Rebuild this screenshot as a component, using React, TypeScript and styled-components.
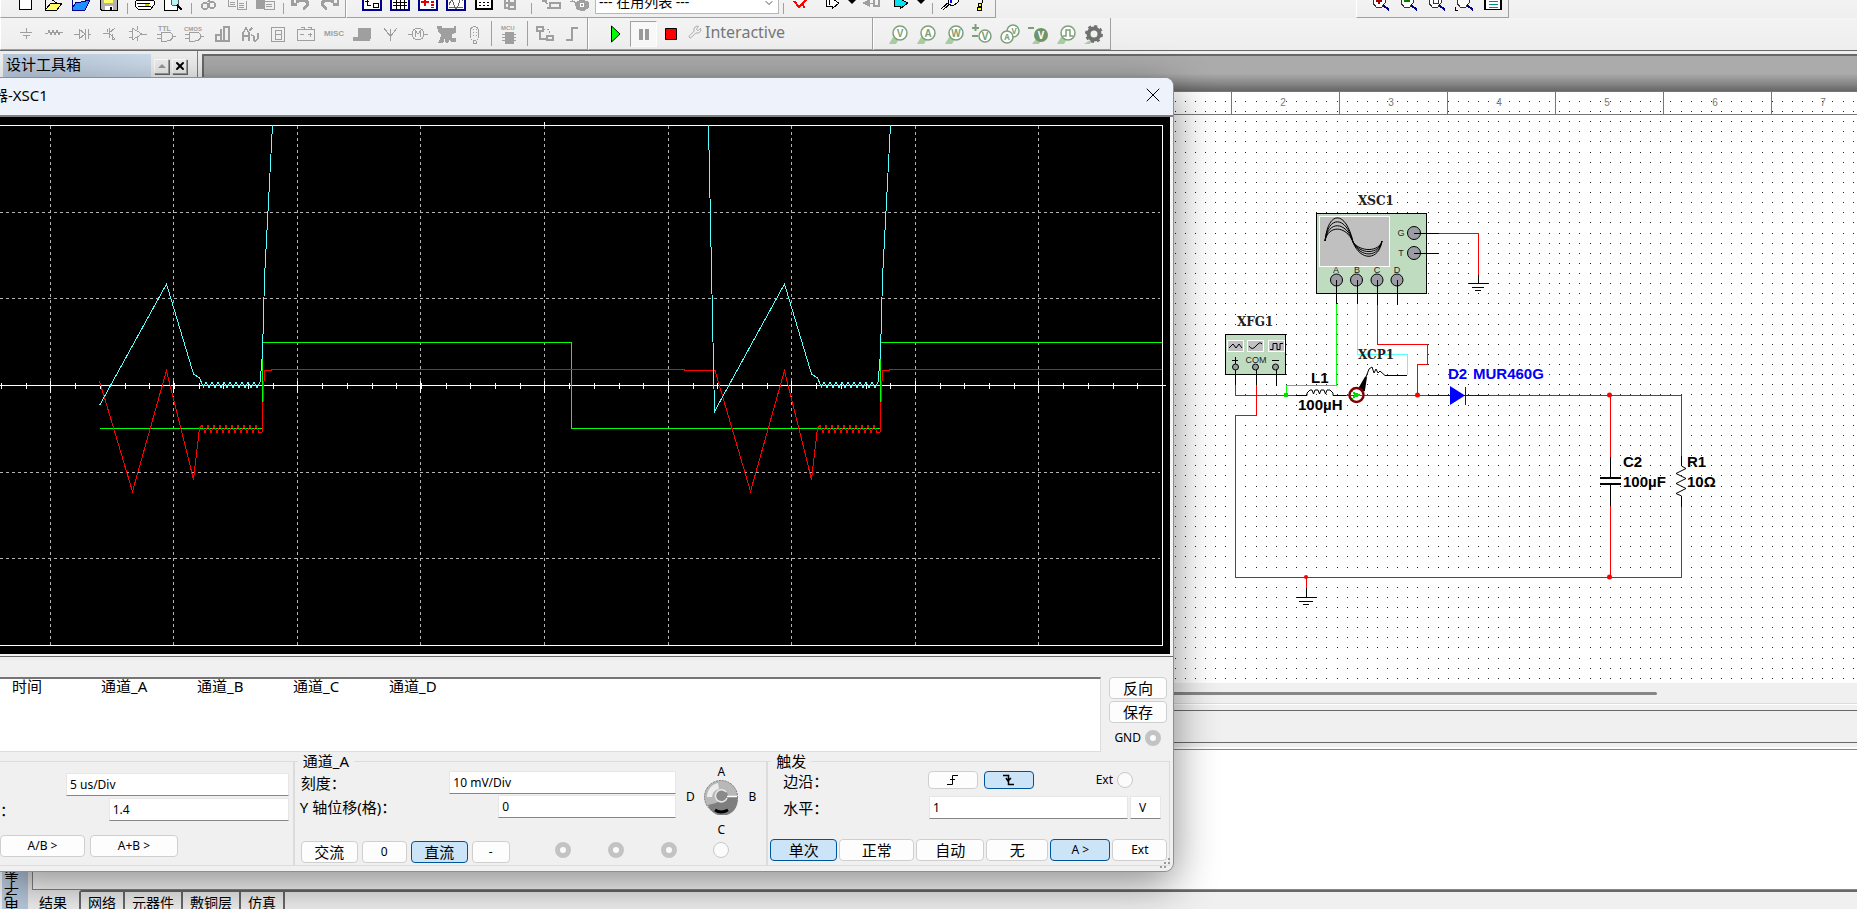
import React from "react";
import styled, { createGlobalStyle, css } from "styled-components";
import { ChevronDown, Wrench, X } from "lucide-react";

const GlobalStyle = createGlobalStyle`
  * { box-sizing: border-box; }
  html, body { margin: 0; padding: 0; height: 100%; overflow: hidden; }
  body {
    background: #f0f0f0;
    color: #000;
    font-family: "Noto Sans", "Noto Sans CJK SC", sans-serif;
    font-size: 15px;
  }
  button, input, select { font-family: inherit; color: inherit; }
  svg { display: block; }
`;

const Desktop = styled.div`
  position: relative;
  display: flex;
  flex-direction: column;
  min-height: 100vh;
  overflow: hidden;
`;

/* ---------- toolbars ---------- */

const ToolRow = styled.div<{ $tall?: boolean }>`
  display: flex;
  height: ${(p) => (p.$tall ? 32 : 18)}px;
  background: linear-gradient(#f3f3f3, #eeeeee);
`;

const ToolGroup = styled.div<{ $pad: number; $end: number }>`
  display: flex;
  align-items: center;
  padding-left: ${(p) => p.$pad}px;
  padding-right: ${(p) => p.$end}px;
  border-right: 1px solid #a0a0a0;
  border-bottom: 1px solid #a0a0a0;
  border-left: 1px solid #fff;
`;

const ToolGap = styled.div<{ $w: number }>`
  flex: 0 1 ${(p) => p.$w}px;
`;

const IconButton = styled.button<{ $w?: number; $pressed?: boolean }>`
  display: flex;
  align-items: center;
  justify-content: center;
  width: ${(p) => p.$w ?? 28}px;
  height: 100%;
  padding: 0;
  border: 0;
  background: none;
  flex: none;
  ${(p) =>
    p.$pressed &&
    css`
      height: 26px;
      background: #f8f8f8;
      border: 1px solid;
      border-color: #a0a0a0 #fff #fff #a0a0a0;
    `}
`;

const TopButton = styled(IconButton)`
  align-items: flex-start;
`;

const Separator = styled.span<{ $w?: number }>`
  flex: none;
  display: flex;
  justify-content: center;
  width: ${(p) => p.$w ?? 8}px;
  height: 100%;
  padding: 3px 0;
  &::before {
    content: "";
    width: 1px;
    background: #a0a0a0;
  }
`;

const ListBox = styled.div`
  position: relative;
  align-self: flex-start;
  display: flex;
  align-items: flex-start;
  width: 184px;
  height: 14px;
  margin: 0 0 0 2px;
  overflow: hidden;
  background: #fff;
  border: 1px solid #b8b8b8;
  border-top: 0;
  svg { margin: -3px 3px 0 0; flex: none; }
`;

const ListSelect = styled.select`
  appearance: none;
  flex: 1;
  height: 20px;
  margin-top: -8px;
  padding: 0 3px;
  border: 0;
  background: transparent;
  font-size: 14px;
  line-height: 20px;
`;

const SimLabel = styled.span`
  display: flex;
  align-items: center;
  gap: 3px;
  padding-left: 3px;
  padding-bottom: 4px;
  color: #777;
  font-size: 16px;
  line-height: 22px;
`;

/* ---------- work area ---------- */

const Main = styled.div`
  display: flex;
  flex: 1;
  border-top: 1px solid #696969;
  min-height: 0;
`;

const Toolbox = styled.aside`
  width: 198px;
  flex: none;
  padding: 3px 10px 0 3px;
  border-right: 1px solid #808080;
`;

const ToolboxTitle = styled.div`
  display: flex;
  align-items: center;
  gap: 3px;
  height: 24px;
  h2 {
    flex: 1;
    margin: 0;
    padding: 0 0 4px 3px;
    background: linear-gradient(90deg, #b7c8dc, #cddcec);
    font-size: 15px;
    font-weight: 400;
    line-height: 20px;
  }
`;

const TinyButton = styled.button`
  display: flex;
  align-items: center;
  justify-content: center;
  width: 15px;
  height: 15px;
  padding: 0;
  background: #f0f0f0;
  border: 1px solid;
  border-color: #fff #a0a0a0 #a0a0a0 #fff;
  box-shadow: 1px 1px #696969;
`;

const Workspace = styled.main`
  flex: 1;
  min-width: 0;
  display: flex;
  flex-direction: column;
  margin: 3px 0 0 4px;
  border-top: 2px solid #696969;
  border-left: 2px solid #696969;
  background: #ababab;
`;

const DocShade = styled.div`
  height: 35px;
  background: linear-gradient(#ababab 50%, #8c8c8c 75%, #666 100%);
`;

const Sheet = styled.div`
  flex: 1;
  min-height: 0;
  overflow: hidden;
  background: #fff;
  border-top: 1px solid #777;
  svg { width: 100%; height: 100%; }
`;

const ScrollTrack = styled.div`
  display: flex;
  align-items: center;
  height: 20px;
  padding-right: 200px;
  background: #f0f0f0;
  &::before {
    content: "";
    flex: 1;
    height: 3px;
    border-radius: 2px;
    background: #868686;
  }
`;

const StatusStrip = styled.div`
  height: 40px;
  padding: 6px 0 0;
  border-top: 1px solid #dcdcdc;
  box-shadow: inset 0 1px #fff;
  border-bottom: 1px solid #696969;
  &::before {
    content: "";
    display: block;
    height: 1px;
    background: #696969;
  }
`;

const Spreadsheet = styled.section`
  display: flex;
  height: 166px;
`;

const SideTitle = styled.div`
  width: 26px;
  margin: 0 4px 0 2px;
  padding-right: 4px;
  background: #b9cade;
  overflow: hidden;
  span {
    writing-mode: vertical-rl;
    transform: rotate(180deg);
    height: 168px;
    line-height: 20px;
    font-size: 15px;
  }
`;

const SheetBody = styled.div`
  flex: 1;
  display: flex;
  flex-direction: column;
  padding-top: 6px;
`;

const ResultArea = styled.div`
  flex: 1;
  background: #fff;
  border: 1px solid #828790;
  border-right: 0;
  box-shadow: 0 -2px #fff;
`;

const TabBar = styled.div`
  display: flex;
  height: 19px;
  overflow: hidden;
`;

const Tab = styled.button<{ $active?: boolean }>`
  flex: none;
  height: 24px;
  padding: 0 ${(p) => (p.$active ? 12 : 7)}px 0 7px;
  border: 0;
  border-right: 2px solid #696969;
  border-top: 2px solid ${(p) => (p.$active ? "transparent" : "#696969")};
  background: #f0f0f0;
  font-size: 14px;
  line-height: 22px;
`;

const TabFill = styled.div`
  flex: 1;
  border-top: 2px solid #696969;
`;

/* ---------- oscilloscope window ---------- */

const ScopeWindow = styled.section`
  position: absolute;
  left: 0;
  top: 77px;
  width: 1174px;
  background: #f0f0f0;
  border: 1px solid #8f8f8f;
  border-left: 0;
  border-radius: 0 9px 9px 0;
  box-shadow: 0 12px 44px rgba(0, 0, 0, 0.46);
  overflow: hidden;
`;

const TitleBar = styled.header`
  display: flex;
  align-items: center;
  justify-content: space-between;
  height: 37px;
  padding: 0 8px 3px 0;
  background: #eef2fa;
  h1 {
    margin: 0 0 0 -7px;
    font-size: 15px;
    font-weight: 400;
    line-height: 20px;
  }
`;

const CloseButton = styled.button`
  display: flex;
  padding: 0;
  border: 0;
  background: none;
`;

const ScopeScreen = styled.div`
  padding-right: 3px;
  border-top: 2px solid #808080;
  border-bottom: 1px solid #696969;
  background: #f4f4f4;
  svg { width: 100%; height: 537px; background: #000; margin-bottom: 2px; }
`;

const ReadoutRow = styled.div`
  display: flex;
  gap: 8px;
  margin-top: 20px;
  padding-right: 6px;
`;

const ReadoutBox = styled.div`
  flex: 1;
  height: 75px;
  background: #fff;
  border-top: 2px solid #757575;
  border-right: 1px solid #ddd;
  border-bottom: 1px solid #ddd;
`;

const ReadoutTable = styled.table`
  border-collapse: collapse;
  margin-left: 12px;
  th {
    width: 96px;
    padding: 0;
    text-align: left;
    font-size: 15px;
    font-weight: 400;
    line-height: 15px;
  }
  th:first-child { width: 89px; }
`;

const SideButtons = styled.div`
  display: flex;
  flex-direction: column;
  gap: 2px;
  width: 58px;
`;

const RadioLabel = styled.label<{ $pad?: boolean }>`
  display: flex;
  align-items: center;
  justify-content: flex-end;
  gap: 4px;
  margin-left: auto;
  padding: ${(p) => (p.$pad ? "4px 6px 0 0" : "0")};
  font-size: 12px;
`;

const RoundRadio = styled.input<{ $off?: boolean }>`
  appearance: none;
  flex: none;
  width: 16px;
  height: 16px;
  margin: 0;
  border-radius: 50%;
  border: ${(p) => (p.$off ? "5px solid #c3c3c3" : "1px solid #c8c8c8")};
  background: #fbfbfb;
`;

const PushButton = styled.button<{ $on?: boolean; $w?: number; $low?: boolean; $latin?: boolean }>`
  display: flex;
  align-items: center;
  justify-content: center;
  width: ${(p) => (p.$w ? `${p.$w}px` : "auto")};
  height: ${(p) => (p.$low ? 18 : 22)}px;
  padding: 0;
  border: 1px solid ${(p) => (p.$on ? "#005499" : "#cfcfcf")};
  border-radius: 4px;
  background: ${(p) => (p.$on ? "#cce4f7" : "#fdfdfd")};
  font-size: ${(p) => (p.$latin ? 12 : 15)}px;
  line-height: 18px;
`;

const Groups = styled.div`
  display: flex;
  padding: 0 3px 5px 0;
`;

const Group = styled.fieldset<{ $w: number; $untitled?: boolean }>`
  display: flex;
  flex-direction: column;
  width: ${(p) => p.$w}px;
  min-width: 0;
  height: ${(p) => (p.$untitled ? 105 : 114)}px;
  margin: ${(p) => (p.$untitled ? 9 : 0)}px 0 0;
  padding: 0;
  border: 1px solid #dcdcdc;
  border-left-width: ${(p) => (p.$untitled ? 0 : 1)}px;
  legend {
    margin-left: 3px;
    padding: 0 5px;
    line-height: 18px;
  }
`;

const Column = styled.div<{ $top: number; $gap: number }>`
  display: flex;
  flex-direction: column;
  gap: ${(p) => p.$gap}px;
  padding-top: ${(p) => p.$top}px;
  flex: 1;
`;

const FieldRow = styled.div<{ $left?: number; $right?: number; $high?: boolean }>`
  display: flex;
  align-items: ${(p) => (p.$high ? "flex-start" : "center")};
  justify-content: space-between;
  height: 23px;
  padding: 0 ${(p) => p.$right ?? 4}px 0 ${(p) => p.$left ?? 0}px;
`;

const FieldLabel = styled.label`
  white-space: nowrap;
  line-height: 20px;
`;

const FieldInput = styled.input<{ $w: number }>`
  width: ${(p) => p.$w}px;
  height: 23px;
  padding: 0 3px;
  border: 1px solid #e6e6e6;
  border-bottom-color: #868686;
  background: #fff;
  font-size: 12px;
`;

const UnitSelect = styled.select`
  appearance: none;
  width: 31px;
  height: 23px;
  padding: 0 8px;
  border: 1px solid #e6e6e6;
  border-bottom-color: #868686;
  background: #fff;
  font-size: 12px;
`;

const ButtonRow = styled.div<{ $gap: number; $left: number; $bottom: number }>`
  display: flex;
  align-items: center;
  gap: ${(p) => p.$gap}px;
  margin-top: auto;
  padding: 0 0 ${(p) => p.$bottom}px ${(p) => p.$left}px;
`;

const RadioSet = styled.div`
  display: flex;
  gap: 37px;
  margin-left: 41px;
  padding-bottom: 4px;
`;

const Inline = styled.div<{ $gap: number }>`
  display: flex;
  gap: ${(p) => p.$gap}px;
`;

const Split = styled.div`
  display: flex;
  flex: 1;
  height: 94px;
`;

const KnobPad = styled.div`
  display: grid;
  grid-template-columns: 16px 36px 16px;
  grid-template-rows: 12px 38px 20px 24px;
  grid-template-areas: ". a ." "d k b" ". c ." ". r .";
  column-gap: 5px;
  align-items: center;
  justify-items: center;
  align-content: start;
  width: 84px;
  margin-top: -4px;
  font-size: 12px;
  line-height: 12px;
`;

const Cell = styled.div<{ $area: string }>`
  grid-area: ${(p) => p.$area};
  align-self: ${(p) => (p.$area === "c" || p.$area === "r" ? "end" : "center")};
`;

const Grip = styled.div`
  position: absolute;
  right: 2px;
  bottom: 2px;
`;

/* ---------- toolbar drawings ---------- */

const G = "#9f9f9f";

const Ico = ({ children, w = 20, h = 20 }: { children: React.ReactNode; w?: number; h?: number }) => (
  <svg width={w} height={h} viewBox={`0 0 ${w} ${h}`} fill="none" stroke={G} shapeRendering="crispEdges">
    {children}
  </svg>
);

const fileIcons: [string, React.ReactNode][] = [
  ["新建", <path d="M4.500 0V9.500H16.500V0" fill="#fff" stroke="#000" strokeWidth="1.500" />],
  ["打开", <><path d="M2 0V10H14L19 3H8L3 9" fill="#ffff66" stroke="#000" /><path d="M9 0l5 3" stroke="#000" /></>],
  ["打开示例", <path d="M1 0V10H14L19 0L10 2H5L1 9" fill="#1e90ff" stroke="#00008b" />],
  ["保存", <><path d="M1 0V9L3 10.500H18V0" fill="#b0b0b0" stroke="#000" /><path d="M5 0h9v3H5z" fill="#ffff66" stroke="none" /><path d="M6 6h8v4H6z" fill="#fff" stroke="none" /><path d="M12 7v3" stroke="#000" strokeWidth="2" /></>],
];
const printIcons: [string, React.ReactNode][] = [
  ["打印", <><path d="M2 0H16L19 1V5L16 9H3L0 6V2Z" fill="#fff" stroke="#000" /><path d="M2 3.500H15M3 6.500h13" stroke="#000" /><path d="M10 5h4" stroke="#cccc00" strokeWidth="2" /></>],
  ["打印预览", <><path d="M1 0V10H14V0" fill="#fff" stroke="#000" /><circle cx="12" cy="2" r="4" fill="#b8f4f4" stroke="#555" /><path d="M14 5L19 10" stroke="#000" strokeWidth="2" /></>],
];
const editIcons: [string, React.ReactNode][] = [
  ["剪切", <><circle cx="6" cy="6" r="3" strokeWidth="1.500" /><circle cx="13" cy="5" r="3" strokeWidth="1.500" /><path d="M7 3L11 0M12 2L9 0" /></>],
  ["复制", <><path d="M1 0V6H9M3 2h5M3 4h5" /><path d="M10 0V9H19V1M12 3h5M12 5h5M12 7h5" /></>],
  ["粘贴", <><path d="M1 0h8v8H1z" fill={G} /><path d="M9 1V9H19V1zM11 4h6M11 6h6" fill="#f0f0f0" /></>],
];

const boxIcons: [string, React.ReactNode][] = [
  ["设计工具箱", <><path d="M1 0V10H19V0" fill="#fff" stroke="#00008b" strokeWidth="2" /><path d="M5 0v5h4M3 1h4M11 3h5v4h-5z" stroke="#000" /></>],
  ["电子表格视图", <><path d="M1 0V10H19V0" fill="#fff" stroke="#00008b" strokeWidth="2" /><path d="M3 2.500H17M3 5.500H17M6.500 0V9M10.500 0V9M14.500 0V9" stroke="#000" /></>],
  ["网表查看器", <><path d="M1 0V10H19V0" fill="#fff" stroke="#00008b" strokeWidth="2" /><path d="M3 2H11M7 0V6" stroke="#e00000" strokeWidth="2" /><path d="M14 1v7" stroke="#e00000" strokeWidth="3" strokeDasharray="2 1" /></>],
  ["图示仪", <><path d="M1 0V10H19V0" fill="#fff" stroke="#00008b" strokeWidth="2" /><path d="M3 5Q6-4 8 5T13 3T17 1M3 7H17" stroke="#666" /></>],
  ["后处理器", <><path d="M2 0V9H18V0" fill="#fff" stroke="#000" strokeWidth="1.500" /><path d="M5 2.500H16M5 5.500H16" stroke="#000" strokeDasharray="2 2" /></>],
  ["母电路图", <path d="M7 0v3h6V0M3 0v8h4M7 5h6v4H7zM3 3h4" strokeWidth="1.500" />],
];

const TopIcons = ({ items }: { items: [string, React.ReactNode][] }) => (
  <>
    {items.map(([name, art]) => (
      <TopButton key={name} aria-label={name}>
        <Ico h={12}>{art}</Ico>
      </TopButton>
    ))}
  </>
);

const svgText = (t: string, x: number, y: number, size = 7) => (
  <text x={x} y={y} fontSize={size} fontWeight="700" fill={G} stroke="none" fontFamily="Liberation Sans, sans-serif">{t}</text>
);

const partIcons: [string, React.ReactNode][] = [
  ["电源", <path d="M4 8.500H16M10.500 4V8M7 11.500H14M10.500 12V15" />],
  ["基本", <path d="M1 9H4L5 6L7 11L9 6L11 11L13 6L15 11L16 8H19" />],
  ["二极管", <path d="M2 10.500H7M7 5V15L13 10ZM13.500 5V16M16 10.500h3M16.500 5v10" />],
  ["晶体管", <path d="M3 9.500H9M9.500 4V14M9 9L15 4M9 9L15 15M12 10v5h3M7 5v3" />],
  ["模拟", <path d="M4 4V16L14 10ZM1 7h3M1 13h3M14 10.500h5M9 2v4M9 13v4" />],
  ["TTL", <>{svgText("TTL", 2, 7)}<path d="M5 8V17H11Q16 17 17 12Q16 8 11 8ZM1 10.500h4M1 14.500h4M17 12.500h3" /></>],
  ["CMOS", <>{svgText("CMOS", 0, 7, 6)}<path d="M5 8V17H11Q16 17 17 12Q16 8 11 8ZM1 10.500h4M1 14.500h4M17 12.500h3" /></>],
  ["其他数字", <path d="M4 17V11H9V17ZM9 5V17M12 3H17V17H12ZM6 17h11" strokeWidth="1.500" />],
  ["混合", <path d="M3 17V9l3-5l3 5v8M3 12h6M11 11q4 0 3 6M18 9v5l-3 4M9 7l3-3" strokeWidth="1.500" />],
  ["指示器", <path d="M3.500 3.500H16.500V17.500H3.500ZM7 6h6v9H7zM7 10.500h6" />],
  ["功率", <path d="M1.500 5.500H18.500V16.500H1.500ZM5 3h3v2M12 3h3v2M4 10.500h4M12 10.500h4M14 8.500v4" />],
  ["其他", svgText("MISC", 0, 12, 8)],
  ["高级外设", <><path d="M6 4H18V14H6Z" fill={G} /><path d="M1 16H18M1 14h5" strokeWidth="2" /></>],
  ["射频", <path d="M10.500 5V17M10 12L4 4M11 12L17 4" />],
  ["机电", <><circle cx="10" cy="10" r="6" /><path d="M0 10.500h4M16 10.500h4M7.500 13V7L10 10L12.500 7V13" /></>],
  ["NI", <path d="M1 2H5V4H18V2H20V8L15 10V14H19V17H15L14 13L12 18H10L9 12L7 18H3L6 11L3 8Z" fill={G} />],
  ["连接器", <><rect x="6.500" y="2.500" width="8" height="14" rx="4" /><path d="M9.500 5v9M12.500 5v9" strokeDasharray="1 2" /><path d="M9 17v2h3v-2" /></>],
];

const chip = (
  <>
    {svgText("MCU", 2, 6, 6)}
    <path d="M6 8h8v11H6z" fill={G} />
    <path d="M3 10.500h14M3 13.500h14M3 16.500h14" />
  </>
);

const PG = "#7d9f78";
const probeLetters: React.ReactNode[] = ["V", "A", "W"].map((l) => (
  <g key={l}>
    <path d="M1 20H8L11 15L5 13Z" fill="#a9cda3" />
    <circle cx="12" cy="9" r="7" fill="#fff" stroke={PG} strokeWidth="1.500" />
    <text x="12" y="13" fontSize="10" fontWeight="700" textAnchor="middle" fill={PG} fontFamily="Liberation Sans, sans-serif">{l}</text>
  </g>
));
const probes: [string, React.ReactNode][] = [
  ["电压探针", probeLetters[0]],
  ["电流探针", probeLetters[1]],
  ["功率探针", probeLetters[2]],
  ["差分电压探针", <><path d="M0 4h7M3.500 0v7M0 12h6" stroke={PG} strokeWidth="2" /><circle cx="13" cy="12" r="6" fill="#fff" stroke={PG} strokeWidth="1.500" /><text x="13" y="16" fontSize="10" fontWeight="700" textAnchor="middle" fill={PG}>V</text></>],
  ["电压电流探针", <><circle cx="13" cy="7" r="6" fill="#fff" stroke={PG} strokeWidth="1.500" /><text x="14" y="10" fontSize="8" fontWeight="700" textAnchor="middle" fill={PG}>V</text><circle cx="7" cy="13" r="6" fill="#fff" stroke={PG} strokeWidth="1.500" /><text x="7" y="16" fontSize="8" fontWeight="700" textAnchor="middle" fill={PG}>A</text></>],
  ["参考电压探针", <><path d="M0 4h6" stroke={PG} strokeWidth="2" /><path d="M4 20H11L13 16L8 15Z" fill="#a9cda3" /><circle cx="13" cy="11" r="7" fill="#6f9469" /><text x="13" y="15" fontSize="10" fontWeight="700" textAnchor="middle" fill="#fff">V</text></>],
  ["数字探针", <><path d="M1 20H8L11 15L5 13Z" fill="#a9cda3" /><circle cx="12" cy="9" r="7" fill="#fff" stroke={PG} strokeWidth="1.500" /><path d="M7 12h3V6h4v6h3" fill="none" stroke={PG} strokeWidth="1.500" /></>],
  ["设置", <><path d="M0 20H6L8 15Z" fill="#a9cda3" /><circle cx="10" cy="10" r="5.500" fill="none" stroke="#707070" strokeWidth="4" /><circle cx="10" cy="10" r="8" fill="none" stroke="#707070" strokeWidth="2" strokeDasharray="3.140 3.140" /></>],
];

const magnifiers = ["放大", "缩小", "缩放区域", "缩放页面"];

/* ---------- oscilloscope traces ---------- */

const ripple = (x0: number, x1: number, hi: number, lo: number) => {
  let d = "";
  let up = true;
  for (let x = x0; x < x1; x += 3) {
    d += `L${x} ${up ? hi : lo}`;
    up = !up;
  }
  return d;
};

const P = 618;
const cyanBurst = (o: number) =>
  `L${o + 166.5} 284L${o + 193.5} 374L${o + 199.5} 378L${o + 203.5} 387` +
  ripple(o + 206, o + 262, 382.5, 388) +
  `L${o + 262.5} 353L${o + 264.5} 278L${o + 272.5} 125`;
const redBurst = (o: number) =>
  `L${o + 132.5} 491.500L${o + 166.5} 370.500L${o + 193.5} 479.500L${o + 199.5} 428` +
  ripple(o + 202, o + 262, 425.5, 432.5) +
  `L${o + 262.5} 432L${o + 262.5} 413L${o + 264.5} 370.500H${o + 271}V369.500`;

const gridX = [50.5, 173.5, 297.5, 420.5, 544.5, 668.5, 791.5, 915.5, 1038.5];
const gridY = [212.5, 298.5, 472.5, 558.5];
const ticks = Array.from({ length: 47 }, (_, i) => Math.round(1 + i * 24.7) + 0.5);

const Traces = () => (
  <svg role="img" aria-label="示波器波形" fill="none" shapeRendering="crispEdges">
    <g transform="translate(0,-117)">
      <g stroke="#b4b4b4" strokeDasharray="3 3">
        {gridX.map((x) => <path key={x} d={`M${x} 126V645`} />)}
        {gridY.map((y) => <path key={y} d={`M0 ${y}H1160`} />)}
      </g>
      <g stroke="#fff">
        <path d="M0 125.500H1162.500V645.500H0M0 385.500H1166M544.500 122V125" />
        {ticks.map((x) => <path key={x} d={`M${x} 383V389`} />)}
        {gridX.map((x) => <path key={x} d={`M${x} 381V393`} />)}
      </g>
      <path stroke="#00ff00" d="M99.500 428.500H262.500V342.500H571.500V428.500H880.500V342.500H1162" />
      <path stroke="#ff0000" d={`M99.500 381${redBurst(0)}H684V370.500H715${redBurst(P)}H1162`} />
      <path stroke="#54ffff" d={`M99.500 405.500${cyanBurst(0)}M708.500 125L713 342L714.500 411.500${cyanBurst(P)}`} />
    </g>
  </svg>
);

/* ---------- schematic ---------- */

const dotsX = Array.from({ length: 140 }, (_, i) => Math.round(1174.6 + i * 10.12));
const dotsY = Array.from({ length: 58 }, (_, i) => Math.round(101 + i * 10.12));
const dotPath = dotsY.map((y) => dotsX.map((x) => `M${x} ${y}h1v1h-1z`).join("")).join("");

const waves = [28, 34, 41, 48];
const sine = (a: number) =>
  `M1325 241C1328 ${237 - a * 0.75} 1346 ${237 - a * 0.75} 1353 242C1360 ${245 + a * 0.45} 1379 ${245 + a * 0.45} 1382 241`;

const Schematic = () => (
  <svg role="img" aria-label="电路原理图" fill="none" shapeRendering="crispEdges">
    <g transform="translate(-204,-92)">
      <path d={dotPath} fill="#222" />
      <path d="M204 114.500H2600" stroke="#777" />
      {[2, 3, 4, 5, 6, 7, 8, 9].map((n) => (
        <g key={n}>
          <path d={`M${1231.5 + (n - 2) * 108} 92V114`} stroke="#777" />
          <text x={1283 + (n - 2) * 108} y="106" fontSize="10" textAnchor="middle" fill="#777" fontFamily="Liberation Sans, sans-serif">{n}</text>
        </g>
      ))}

      <g stroke="#ff0000">
        <path d="M1439 233.500H1478.500V275M1377.500 305V344.500H1427.500V364.500H1417.500V395.500" />
        <path d="M1235.500 385V395.500H1296M1346 395.500H1428M1488 395.500H1681.500V456M1681.500 507V577.500H1235.500V415.500H1256.500V385M1610.500 395V457M1610.500 506V577M1306.500 577V588" />
      </g>
      <path d="M1336.500 304V385.500H1286.500V395" stroke="#00ff00" />
      <path d="M1357.500 304V354.500H1407.500V375" stroke="#54ffff" />
      <g fill="#ff0000" shapeRendering="auto">
        <circle cx="1417.500" cy="395" r="2.500" />
        <circle cx="1609.500" cy="395" r="2.500" />
        <circle cx="1609.500" cy="577" r="2.500" />
        <circle cx="1306" cy="577" r="2" />
      </g>
      <circle cx="1286" cy="395" r="2.500" fill="#00e000" />

      <rect x="1316.500" y="213.500" width="110" height="80" fill="#c0dcc0" stroke="#000" />
      <rect x="1319.500" y="216.500" width="70" height="50" fill="#c0c0c0" stroke="#fff" />
      <g stroke="#000" shapeRendering="auto">
        {waves.map((a) => <path key={a} d={sine(a - 12)} />)}
      </g>
      <g fill="#9c9ca4" stroke="#000" shapeRendering="auto">
        {[1336.5, 1356.5, 1377, 1397].map((x) => <circle key={x} cx={x} cy="280" r="6" />)}
        <circle cx="1414" cy="233" r="6.500" />
        <circle cx="1414" cy="253" r="6.500" />
      </g>
      <path stroke="#000" d="M1336.500 280V304M1357.500 280V304M1377.500 280V305M1397.500 280V305M1414 233.500H1439M1414 253.500H1439M1478.500 275V283M1468 283.500H1489M1472 287.500H1484M1475 290.500H1481" />
      <g fontFamily="Liberation Sans, sans-serif" fontSize="9" fill="#222" textAnchor="middle">
        <text x="1336" y="273">A</text>
        <text x="1357" y="273">B</text>
        <text x="1377" y="273">C</text>
        <text x="1397" y="273">D</text>
        <text x="1401" y="236">G</text>
        <text x="1401" y="256">T</text>
      </g>

      <rect x="1225.500" y="334.500" width="60" height="40" fill="#c0dcc0" stroke="#000" />
      <g fill="#c0c0c0" stroke="#fff">
        <rect x="1227.500" y="340.500" width="16" height="11" />
        <rect x="1247.500" y="340.500" width="16" height="11" />
        <rect x="1268.500" y="340.500" width="16" height="11" />
      </g>
      <path stroke="#000" shapeRendering="auto" d="M1229 348L1233 344L1236 348L1239 344L1242 348M1249 346Q1252 351 1256 346T1262 344M1270 349.500H1273V343.500H1277V349.500H1280V343.500H1283" />
      <path stroke="#000" d="M1232 360.500H1238M1235.500 357V364M1272 360.500H1279M1235.500 367V385M1256.500 367V385M1276.500 367V386" />
      <text x="1256" y="363" fontSize="9" textAnchor="middle" fill="#222" fontFamily="Liberation Sans, sans-serif">COM</text>
      <g fill="#9c9ca4" stroke="#000" shapeRendering="auto">
        {[1235.5, 1255.5, 1275.5].map((x) => <circle key={x} cx={x} cy="367" r="3" />)}
      </g>

      <g stroke="#000" shapeRendering="auto">
        <path d="M1296 395.500H1307V393L1310 390L1312 390L1313.500 394L1315 390H1318L1319.500 394L1321 390H1324L1325.500 394L1327 390H1330L1333 393V395.500H1346" />
        <path d="M1407 375.500H1385L1380 371L1378 373L1376 369L1374 373L1372 367L1369 369L1366 377" />
        <path d="M1366 377L1359 389L1364 390Z" fill="#000" strokeWidth="2" />
      </g>
      <circle cx="1356.500" cy="395" r="7" fill="#fff" stroke="#800000" strokeWidth="2.500" shapeRendering="auto" />
      <path d="M1350 395.500H1363" stroke="#ff0000" />
      <path d="M1352 391L1361 395L1352 399L1354 395Z" fill="#00e000" />

      <path d="M1450 386V405L1465 395.500Z" fill="#0000ff" shapeRendering="auto" />
      <path d="M1428 395.500H1488M1465.500 387V405" stroke="#0000ff" />
      <path stroke="#000" d="M1610.500 457V478M1610.500 484V506M1681.500 456V466M1681.500 496V507M1306.500 588V597M1296 597.500H1317M1299 601.500H1313M1303 604.500H1309" />
      <path stroke="#000" strokeWidth="2" d="M1600 478H1621M1600 484H1621" />
      <path stroke="#000" shapeRendering="auto" d="M1681.500 466L1686 468.500L1676 473.500L1686 478.500L1676 483.500L1686 488.500L1676 493.500L1681.500 496" />

      <g fontFamily="DejaVu Serif, serif" fontSize="12" fontWeight="700" fill="#222">
        <text x="1358" y="205">XSC1</text>
        <text x="1237" y="326">XFG1</text>
        <text x="1358" y="359">XCP1</text>
      </g>
      <g fontFamily="Liberation Sans, sans-serif" fontSize="15" fontWeight="700" fill="#000">
        <text x="1311" y="383">L1</text>
        <text x="1298" y="410">100µH</text>
        <text x="1448" y="379" fill="#0000ff">D2</text>
        <text x="1473" y="379" fill="#0000ff">MUR460G</text>
        <text x="1623" y="467">C2</text>
        <text x="1623" y="487">100µF</text>
        <text x="1687" y="467">R1</text>
        <text x="1687" y="487">10Ω</text>
      </g>
    </g>
  </svg>
);

const Knob = () => (
  <svg width="36" height="36" viewBox="0 0 36 36">
    <circle cx="18" cy="18" r="16.500" fill="#b8b8b8" stroke="#777" strokeDasharray="2 1" />
    <path d="M5 26A15 15 0 0 0 34 17L22 18L13 24Z" fill="#7e7e7e" />
    <path d="M4 18A14 14 0 0 1 15 4L16 10A8 8 0 0 0 9 18Z" fill="#ececec" />
    <circle cx="19" cy="17" r="6" fill="#8a8a8a" />
    <path d="M24 19A6 6 0 1 1 23 13" fill="none" stroke="#e6e6e6" strokeWidth="1.500" />
    <path d="M24 17.500H34" stroke="#fff" strokeWidth="1.500" />
    <path d="M12 31Q18 35 25 31" fill="none" stroke="#000" strokeWidth="3" />
  </svg>
);

const Caret = () => <svg width="8" height="4"><path d="M0 0H8L4 4Z" fill="#000" /></svg>;

export default function App() {
  return (
    <>
      <GlobalStyle />
      <Desktop>
        <ToolRow>
          <ToolGroup $pad={10} $end={2}>
            <TopIcons items={fileIcons} />
            <Separator />
            <TopIcons items={printIcons} />
            <Separator />
            <TopIcons items={editIcons} />
            <Separator />
            <TopButton aria-label="撤销"><Ico h={12}><path d="M1 0V4H6M5 2Q14-2 17 3Q17 6 12 9" strokeWidth="3" /></Ico></TopButton>
            <TopButton aria-label="重做"><Ico h={12}><path d="M19 0V4H14M15 2Q6-2 3 3Q3 6 8 9" strokeWidth="3" /></Ico></TopButton>
          </ToolGroup>
          <ToolGroup $pad={11} $end={1}>
            <TopIcons items={boxIcons} />
            <Separator $w={11} />
            <TopButton aria-label="元器件向导"><Ico h={12}><path d="M1 1h5M3 0l3 4M9 3h10v5H9zM6 8h3" strokeWidth="1.500" /></Ico></TopButton>
            <TopButton aria-label="数据库管理器"><Ico h={12}><path d="M1 1h5M3 0l3 3" /><path d="M6 3L12 0L19 2V8L14 11L8 9Z" fill={G} /><circle cx="13" cy="5" r="2" stroke="#fff" /></Ico></TopButton>
            <ListBox>
              <ListSelect aria-label="在用列表"><option>--- 在用列表 ---</option></ListSelect>
              <ChevronDown size={12} color="#555" />
            </ListBox>
            <Separator />
            <TopButton $w={31} aria-label="电气规则检查"><Ico h={12}><path d="M1 1L6 7L13 0M6 7L10 4L11 8" stroke="#ff0000" strokeWidth="2" /></Ico></TopButton>
            <TopButton aria-label="转移到 PCB"><Ico h={12}><path d="M4 0V6H10V9L17 3L12 0M7 0v5" fill="#fff" stroke="#000" /></Ico></TopButton>
            <TopButton $w={12} aria-label="更多"><Caret /></TopButton>
            <TopButton aria-label="反向注解"><Ico h={12}><path d="M1 3L7 0V6ZM7 3h4" fill={G} /><path d="M12 0v6h5V0" strokeWidth="2" /></Ico></TopButton>
            <TopButton aria-label="正向注解"><Ico h={12}><path d="M4 0V6H10V9L18 3L12 0" fill="#00e5ee" stroke="#000" /></Ico></TopButton>
            <TopButton $w={14} aria-label="更多注解"><Caret /></TopButton>
            <Separator />
            <TopButton aria-label="查找范例"><Ico h={12}><path d="M1 9L9 2M3 10L10 4" stroke="#000" /><path d="M8 0V4L13 6L18 2V0" fill="#fff" stroke="#000" /><path d="M11 0v3" stroke="#0000ff" strokeWidth="2" /></Ico></TopButton>
            <TopButton $w={30} aria-label="帮助"><Ico h={12}><path d="M14 0L13 3L9 4V6H12V3M8 7h4v3H8z" fill="#ffff00" stroke="#000" /></Ico></TopButton>
          </ToolGroup>
          <ToolGap $w={360} />
          <ToolGroup $pad={10} $end={1}>
            {magnifiers.map((m, i) => (
              <TopButton key={m} aria-label={m}>
                <Ico h={12}>
                  <path d="M2 0V3L5 7H11L14 3V0" fill="#fff" stroke="#333" />
                  <path d="M12 5L18 10" stroke="#00008b" strokeWidth="2" />
                  {i === 0 && <path d="M8 0v4M5 1h6" stroke="#a00000" strokeWidth="2" />}
                  {i === 1 && <path d="M5 1h6" stroke="#008000" strokeWidth="2" />}
                  {i === 2 && <path d="M6 0v3h5V0" stroke="#333" />}
                  {i === 3 && <path d="M0 7v3h3" stroke="#000" />}
                </Ico>
              </TopButton>
            ))}
            <TopButton aria-label="全屏"><Ico h={12}><path d="M2 0V9.500H18V0" fill="#fff" stroke="#000" strokeWidth="1.500" /><path d="M6 1.500h9M6 4.500h9M6 7.500h9" stroke="#008b8b" /></Ico></TopButton>
          </ToolGroup>
        </ToolRow>

        <ToolRow $tall>
          <ToolGroup $pad={11} $end={0}>
            {partIcons.map(([name, art]) => (
              <IconButton key={name} aria-label={name}><Ico>{art}</Ico></IconButton>
            ))}
            <Separator $w={7} />
            <IconButton aria-label="MCU"><Ico>{chip}</Ico></IconButton>
            <Separator />
            <IconButton aria-label="层次块"><Ico><path d="M2 3h6v4H2zM5 7v8h6M12 12h6v4h-6z" strokeWidth="1.500" /><path d="M8 5h6v6" strokeDasharray="2 2" /></Ico></IconButton>
            <IconButton aria-label="总线"><Ico><path d="M3 16H9V4H15" strokeWidth="2" /></Ico></IconButton>
          </ToolGroup>
          <ToolGroup $pad={13} $end={87}>
            <IconButton aria-label="运行"><svg width="10" height="18"><path d="M.5 1V17L9 9Z" fill="#00ff00" stroke="#000" /></svg></IconButton>
            <IconButton $w={27} $pressed aria-label="暂停"><svg width="12" height="12"><path d="M1 1h4v11H1zM7 1h4v11H7z" fill="#999" /></svg></IconButton>
            <IconButton aria-label="停止"><svg width="12" height="12"><path d="M.5.5h11v11H.5z" fill="#ff0000" stroke="#000" /></svg></IconButton>
            <SimLabel><Wrench size={14} strokeWidth={1} />Interactive</SimLabel>
          </ToolGroup>
          <ToolGroup $pad={10} $end={2}>
            {probes.map(([name, art]) => (
              <IconButton key={name} aria-label={name}><svg width="20" height="20">{art}</svg></IconButton>
            ))}
          </ToolGroup>
        </ToolRow>

        <Main>
          <Toolbox>
            <ToolboxTitle>
              <h2>设计工具箱</h2>
              <TinyButton aria-label="折叠"><svg width="8" height="4"><path d="M4 0L8 4H0Z" fill="#999" /></svg></TinyButton>
              <TinyButton aria-label="关闭工具箱"><X size={12} strokeWidth={4} /></TinyButton>
            </ToolboxTitle>
          </Toolbox>
          <Workspace>
            <DocShade />
            <Sheet><Schematic /></Sheet>
            <ScrollTrack />
          </Workspace>
        </Main>
        <StatusStrip />
        <Spreadsheet>
          <SideTitle><span>电子表格视图</span></SideTitle>
          <SheetBody>
            <ResultArea />
            <TabBar>
              <Tab $active>结果</Tab>
              <Tab>网络</Tab>
              <Tab>元器件</Tab>
              <Tab>敷铜层</Tab>
              <Tab>仿真</Tab>
              <TabFill />
            </TabBar>
          </SheetBody>
        </Spreadsheet>

        <ScopeWindow>
          <TitleBar>
            <h1>器-XSC1</h1>
            <CloseButton aria-label="关闭"><X size={24} strokeWidth={1} /></CloseButton>
          </TitleBar>
          <ScopeScreen><Traces /></ScopeScreen>
          <ReadoutRow>
            <ReadoutBox>
              <ReadoutTable>
                <thead>
                  <tr><th>时间</th><th>通道_A</th><th>通道_B</th><th>通道_C</th><th>通道_D</th></tr>
                </thead>
              </ReadoutTable>
            </ReadoutBox>
            <SideButtons>
              <PushButton>反向</PushButton>
              <PushButton>保存</PushButton>
              <RadioLabel $pad>GND<RoundRadio type="radio" name="gnd" $off /></RadioLabel>
            </SideButtons>
          </ReadoutRow>
          <Groups>
            <Group $w={294} $untitled aria-label="时基">
              <Column $top={11} $gap={2}>
                <FieldRow $left={66}>
                  <FieldInput $w={224} aria-label="标度" defaultValue="5 us/Div" />
                </FieldRow>
                <FieldRow>
                  <FieldLabel htmlFor="xpos">：</FieldLabel>
                  <FieldInput $w={180} id="xpos" defaultValue="1.4" />
                </FieldRow>
                <ButtonRow $gap={5} $left={0} $bottom={8}>
                  <PushButton $w={85} $latin>A/B &gt;</PushButton>
                  <PushButton $w={88} $latin>A+B &gt;</PushButton>
                </ButtonRow>
              </Column>
            </Group>
            <Group $w={474}>
              <legend>通道_A</legend>
              <Split>
                <Column $top={1} $gap={1}>
                  <FieldRow $left={6} $right={6}>
                    <FieldLabel htmlFor="scale">刻度：</FieldLabel>
                    <FieldInput $w={227} id="scale" defaultValue="10 mV/Div" />
                  </FieldRow>
                  <FieldRow $left={5} $right={6}>
                    <FieldLabel htmlFor="ypos">Y 轴位移(格)：</FieldLabel>
                    <FieldInput $w={178} id="ypos" defaultValue="0" />
                  </FieldRow>
                  <ButtonRow $gap={4} $left={6} $bottom={2}>
                    <PushButton $w={57}>交流</PushButton>
                    <PushButton $w={45} $latin>0</PushButton>
                    <PushButton $w={57} $on>直流</PushButton>
                    <PushButton $w={38} $latin>-</PushButton>
                    <RadioSet>
                      <RoundRadio type="radio" name="ch" aria-label="通道 1" $off />
                      <RoundRadio type="radio" name="ch" aria-label="通道 2" $off />
                      <RoundRadio type="radio" name="ch" aria-label="通道 3" $off />
                    </RadioSet>
                  </ButtonRow>
                </Column>
                <KnobPad>
                  <Cell $area="a">A</Cell>
                  <Cell $area="d">D</Cell>
                  <Cell $area="k"><Knob /></Cell>
                  <Cell $area="b">B</Cell>
                  <Cell $area="c">C</Cell>
                  <Cell $area="r"><RoundRadio type="radio" name="ch" aria-label="通道 4" /></Cell>
                </KnobPad>
              </Split>
            </Group>
            <Group $w={403}>
              <legend>触发</legend>
              <Split>
                <Column $top={1} $gap={2}>
                  <FieldRow $left={15} $right={36} $high>
                    <FieldLabel as="span">边沿：</FieldLabel>
                    <ToolGap $w={100} />
                    <Inline $gap={6}>
                      <PushButton $w={50} $low aria-label="上升沿"><svg width="14" height="12"><path d="M1 10.500H6.500V1.500H12M4 5.500H9" fill="none" stroke="#000" /></svg></PushButton>
                      <PushButton $w={50} $low $on aria-label="下降沿"><svg width="14" height="12"><path d="M1 1.500H6.500V10.500H12M4 4L6 7L9 4" fill="none" stroke="#000" strokeWidth="1.500" /></svg></PushButton>
                    </Inline>
                    <RadioLabel>Ext<RoundRadio type="radio" name="ext" /></RadioLabel>
                  </FieldRow>
                  <FieldRow $left={15} $right={8}>
                    <FieldLabel htmlFor="level">水平：</FieldLabel>
                    <Inline $gap={2}>
                      <FieldInput $w={199} id="level" defaultValue="1" />
                      <UnitSelect aria-label="单位"><option>V</option></UnitSelect>
                    </Inline>
                  </FieldRow>
                  <ButtonRow $gap={2} $left={2} $bottom={4}>
                    <PushButton $w={67} $on>单次</PushButton>
                    <PushButton $w={75}>正常</PushButton>
                    <PushButton $w={68}>自动</PushButton>
                    <PushButton $w={62}>无</PushButton>
                    <PushButton $w={60} $on $latin>A &gt;</PushButton>
                    <PushButton $w={55} $latin>Ext</PushButton>
                  </ButtonRow>
                </Column>
              </Split>
            </Group>
          </Groups>
          <Grip><svg width="12" height="12"><path d="M9 1h2v2H9zM5 5h2v2H5zM9 5h2v2H9zM1 9h2v2H1zM5 9h2v2H5z" fill="#9a9a9a" /></svg></Grip>
        </ScopeWindow>
      </Desktop>
    </>
  );
}
